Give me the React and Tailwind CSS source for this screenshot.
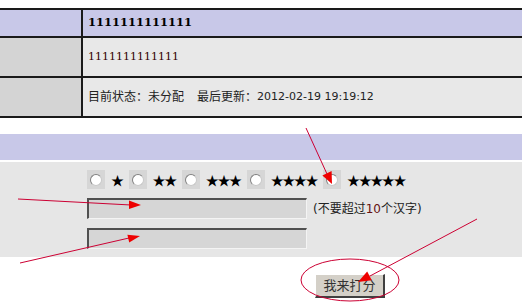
import React from 'react';

const Radio = () => (
  <div className="flex h-[19px] w-[18px] items-center justify-center bg-[#d6d6d6]">
    <div className="h-[12px] w-[12px] rounded-full border border-t-[#808080] border-l-[#808080] border-r-[#c8c8c8] border-b-[#c8c8c8] bg-white" />
  </div>
);

const Stars = ({n}) => (
  <span className="text-[13px] leading-none tracking-[-1.4px] text-black [font-family:'Noto_Sans_CJK_SC',sans-serif]">
    {'★'.repeat(n)}
  </span>
);

const App = () => {
  const cjk = "[font-family:'DejaVu_Sans','Noto_Sans_CJK_SC',sans-serif]";

  return (
    <div className={`relative h-[305px] w-[522px] overflow-hidden bg-white ${cjk}`}>
      <div className="pt-[8px]">
        {/* info table */}
        <div className="border-t-2 border-[#1a1a1a]">
          <div className="flex h-[28px] border-b-2 border-[#1a1a1a] bg-[#c8c8e8]">
            <div className="w-[83px] shrink-0 border-r-2 border-[#1a1a1a]" />
            <div className="flex items-center pl-[5px] text-[11.5px] font-bold text-black [font-family:'DejaVu_Serif',serif]">
              1111111111111
            </div>
          </div>
          <div className="flex h-[40px] border-b-2 border-[#1a1a1a] bg-[#e8e8e8]">
            <div className="w-[83px] shrink-0 border-r-2 border-[#1a1a1a] bg-[#d4d4d4]" />
            <div className="flex items-center pl-[5px] text-[11px] text-[#330000] [font-family:'DejaVu_Serif',serif]">
              1111111111111
            </div>
          </div>
          <div className="flex h-[40px] border-b-2 border-[#1a1a1a] bg-[#e8e8e8]">
            <div className="w-[83px] shrink-0 border-r-2 border-[#1a1a1a] bg-[#d4d4d4]" />
            <div className="flex items-center pl-[5px] text-[12px] text-[#222]">
              <span>目前状态：未分配</span>
              <span className="ml-[13px]">最后更新：</span>
              <span className="text-[11px]">2012-02-19 19:19:12</span>
            </div>
          </div>
        </div>

        {/* rating form */}
        <div className="mt-[16px] h-[26px] bg-[#c8c8e8]" />
        <div className="mt-[2px] bg-[#e6e6e6] pb-[8px] pl-[87px] pt-[8px]">
          <div className="flex h-[19px] items-center gap-[6px]">
            <Radio />
            <Stars n={1} />
            <Radio />
            <Stars n={2} />
            <Radio />
            <Stars n={3} />
            <Radio />
            <Stars n={4} />
            <Radio />
            <Stars n={5} />
          </div>
          <div className="mt-[9px] flex items-center">
            <div className="h-[21px] w-[220px] border-l-2 border-t-2 border-b border-r border-l-[#505050] border-t-[#505050] border-b-[#f4f4f4] border-r-[#f4f4f4] bg-[#d6d6d6]" />
            <span className="ml-[6px] text-[12px] text-[#222]">
              (不要超过<span className="text-[#661111]">10</span>个汉字)
            </span>
          </div>
          <div className="mt-[9px] h-[21px] w-[220px] border-l-2 border-t-2 border-b border-r border-l-[#505050] border-t-[#505050] border-b-[#f4f4f4] border-r-[#f4f4f4] bg-[#d6d6d6]" />
        </div>

        <div className="ml-[315px] mt-[17px]">
          <button className="flex h-[24px] w-[70px] items-center justify-center border-l border-t border-b-2 border-r-2 border-l-white border-t-white border-b-[#404040] border-r-[#404040] bg-[#d4d0c8] text-[13px] text-[#333]">
            我来打分
          </button>
        </div>
      </div>

      {/* red annotation marks */}
      <svg className="pointer-events-none absolute left-0 top-0" width="522" height="305">
        <g stroke="#cc0033" strokeWidth="1" fill="none">
          <line x1="18" y1="199" x2="131" y2="205" />
          <line x1="20" y1="263" x2="129" y2="238" />
          <line x1="306" y1="128" x2="327" y2="174" />
          <line x1="477" y1="219" x2="370" y2="276" />
          <ellipse cx="350" cy="280" rx="49" ry="21" />
        </g>
        <g fill="#ee0000">
          <polygon points="141,205 129,200.5 129,209" />
          <polygon points="140,236 129.2,242.5 127.4,234.7" />
          <polygon points="332,184 322.4,175.5 331.6,171" />
          <polygon points="358,282 371.8,280.3 367.2,271.5" />
        </g>
      </svg>
    </div>
  );
};

export default App;
